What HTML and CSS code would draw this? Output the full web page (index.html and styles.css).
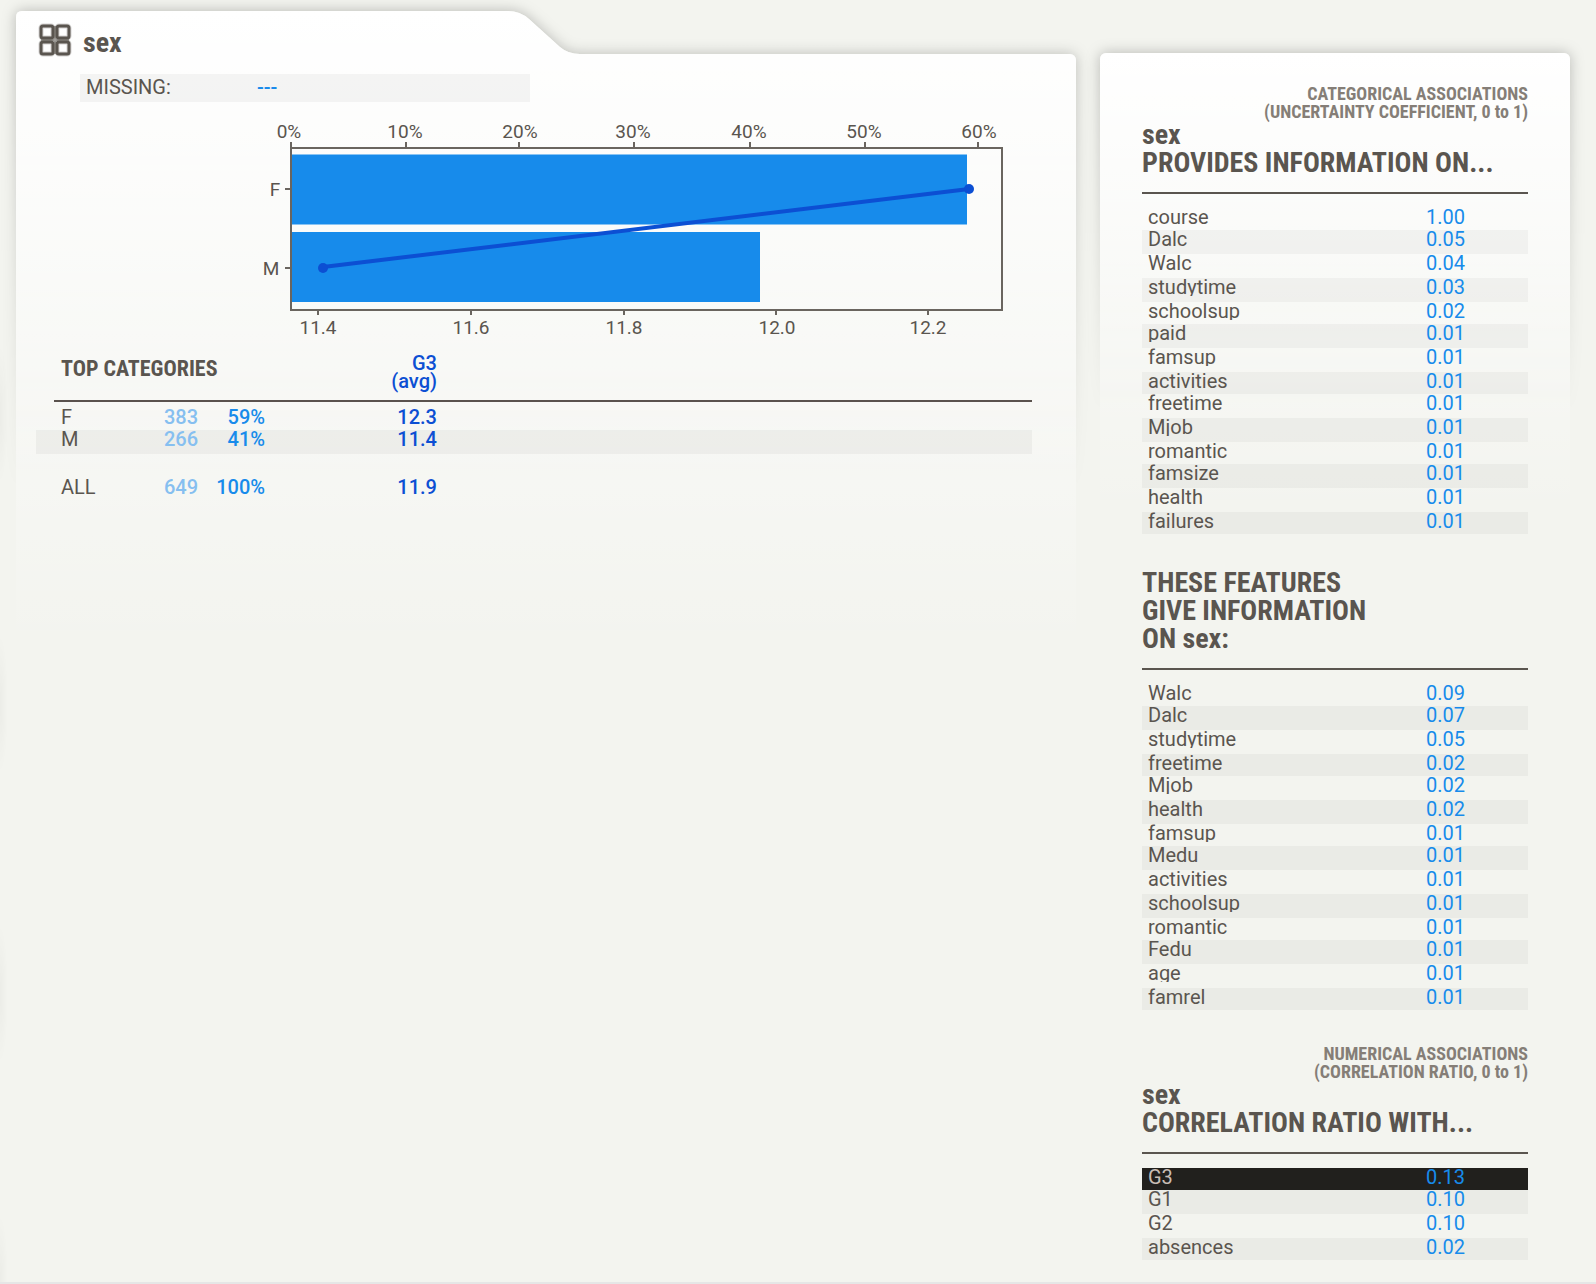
FILE: index.html
```html
<!DOCTYPE html>
<html lang="en">
<head>
<meta charset="utf-8">
<meta name="viewport" content="width=device-width, initial-scale=1">
<title>Feature report: sex</title>
<link rel="stylesheet" href="styles.css">
</head>
<body>
<main class="report">
  <section class="card detail">
    <svg class="backdrop" aria-hidden="true">
      <defs>
        <linearGradient id="fade-left" gradientUnits="userSpaceOnUse" x1="0" y1="0" x2="0" y2="640">
          <stop offset="0" stop-color="#fff"/>
          <stop offset="1" stop-color="#fff" stop-opacity="0"/>
        </linearGradient>
        <linearGradient id="shade-left" gradientUnits="userSpaceOnUse" x1="0" y1="0" x2="0" y2="480">
          <stop offset="0" stop-color="#fff"/>
          <stop offset="1" stop-color="#000"/>
        </linearGradient>
        <mask id="mask-left" maskUnits="userSpaceOnUse" x="-40" y="-40" width="2000" height="700">
          <rect x="-40" y="-40" width="2000" height="700" fill="url(#shade-left)"/>
        </mask>
        <clipPath id="folder">
          <rect x="0" y="43" width="100%" height="700" rx="6"/>
          <path d="M0 60V6Q0 0 6 0H492Q504 0 513 8L544 36Q552 43 564 43V60Z"/>
        </clipPath>
      </defs>
      <g mask="url(#mask-left)">
        <g class="shadow">
          <rect x="0" y="43" width="100%" height="700" rx="6"/>
          <path d="M0 60V6Q0 0 6 0H492Q504 0 513 8L544 36Q552 43 564 43V60Z"/>
        </g>
      </g>
      <g clip-path="url(#folder)">
        <rect width="100%" height="743" fill="url(#fade-left)"/>
      </g>
    </svg>

    <header class="title">
      <svg class="icon" width="32" height="32" viewBox="0 0 32 32" aria-hidden="true">
        <path d="M15 2H17V30H15ZM2 15H30V17H2Z" fill="#5a554f" opacity="0.55"/>
        <g id="tiles" fill="none" stroke="#5a554f" stroke-width="5" opacity="0.25">
          <rect x="2" y="2" width="12" height="12" rx="2"/>
          <rect x="18" y="2" width="12" height="12" rx="2"/>
          <rect x="2" y="18" width="12" height="12" rx="2"/>
          <rect x="18" y="18" width="12" height="12" rx="2"/>
        </g>
        <g fill="none" stroke="#5a554f" stroke-width="3">
          <rect x="2" y="2" width="12" height="12" rx="2"/>
          <rect x="18" y="2" width="12" height="12" rx="2"/>
          <rect x="2" y="18" width="12" height="12" rx="2"/>
          <rect x="18" y="18" width="12" height="12" rx="2"/>
        </g>
      </svg>
      <h1>sex</h1>
    </header>

    <dl class="missing"><dt>MISSING:</dt><dd>---</dd></dl>

    <svg class="chart" viewBox="0 0 780 232" role="img" aria-label="Share of F and M with average G3">
      <g class="bars">
        <rect x="51" y="44.500" width="676" height="70"/>
        <rect x="51" y="122" width="469" height="70"/>
      </g>
      <path class="axis" d="M51 32V200H762V38H51M166 32V38M279 32V38M394 32V38M510 32V38M625 32V38M738 32V38M78 200V205M231 200V205M384 200V205M536 200V205M688 200V205M45 79H51M45 158H51"/>
      <path class="trend" d="M83 157L729 79"/>
      <circle class="dot" cx="83" cy="158" r="5"/>
      <circle class="dot" cx="729" cy="79" r="5"/>
      <g class="labels">
        <text x="49" y="28">0%</text>
        <text x="165" y="28">10%</text>
        <text x="280" y="28">20%</text>
        <text x="393" y="28">30%</text>
        <text x="509" y="28">40%</text>
        <text x="624" y="28">50%</text>
        <text x="739" y="28">60%</text>
        <text x="78" y="224">11.4</text>
        <text x="231" y="224">11.6</text>
        <text x="384" y="224">11.8</text>
        <text x="537" y="224">12.0</text>
        <text x="688" y="224">12.2</text>
        <text x="35" y="86">F</text>
        <text x="31" y="165">M</text>
      </g>
    </svg>

    <table class="categories">
      <colgroup><col class="c-name"><col class="c-count"><col class="c-share"><col class="c-avg"><col></colgroup>
      <thead>
        <tr><th class="name" colspan="3">TOP CATEGORIES</th><th class="avg">G3<br>(avg)</th><th></th></tr>
      </thead>
      <tbody>
        <tr><td class="name">F</td><td class="count">383</td><td class="share">59%</td><td class="avg">12.3</td><td></td></tr>
        <tr class="shaded"><td class="name">M</td><td class="count">266</td><td class="share">41%</td><td class="avg">11.4</td><td></td></tr>
      </tbody>
      <tfoot>
        <tr><td class="name">ALL</td><td class="count">649</td><td class="share">100%</td><td class="avg">11.9</td><td></td></tr>
      </tfoot>
    </table>
  </section>

  <aside class="card associations">
    <svg class="backdrop" aria-hidden="true">
      <defs>
        <linearGradient id="fade-right" gradientUnits="userSpaceOnUse" x1="0" y1="0" x2="0" y2="460">
          <stop offset="0" stop-color="#fff"/>
          <stop offset="1" stop-color="#fff" stop-opacity="0"/>
        </linearGradient>
        <linearGradient id="shade-right" gradientUnits="userSpaceOnUse" x1="0" y1="0" x2="0" y2="360">
          <stop offset="0" stop-color="#fff"/>
          <stop offset="1" stop-color="#000"/>
        </linearGradient>
        <mask id="mask-right" maskUnits="userSpaceOnUse" x="-40" y="-40" width="2000" height="520">
          <rect x="-40" y="-40" width="2000" height="520" fill="url(#shade-right)"/>
        </mask>
      </defs>
      <g mask="url(#mask-right)">
        <g class="shadow"><rect x="0" y="0" width="100%" height="700" rx="6"/></g>
      </g>
      <rect width="100%" height="700" rx="6" fill="url(#fade-right)"/>
    </svg>

    <section>
      <p class="kind">CATEGORICAL ASSOCIATIONS<br>(UNCERTAINTY COEFFICIENT, 0 to 1)</p>
      <h2>sex<br>PROVIDES INFORMATION ON...</h2>
      <table class="scores">
        <tr class="short"><th>course</th><td>1.00</td></tr>
        <tr><th>Dalc</th><td>0.05</td></tr>
        <tr><th>Walc</th><td>0.04</td></tr>
        <tr><th><div>studytime</div></th><td>0.03</td></tr>
        <tr class="short"><th><div>schoolsup</div></th><td>0.02</td></tr>
        <tr><th><div>paid</div></th><td>0.01</td></tr>
        <tr><th><div>famsup</div></th><td>0.01</td></tr>
        <tr class="short"><th>activities</th><td>0.01</td></tr>
        <tr><th>freetime</th><td>0.01</td></tr>
        <tr><th><div>Mjob</div></th><td>0.01</td></tr>
        <tr class="short"><th>romantic</th><td>0.01</td></tr>
        <tr><th>famsize</th><td>0.01</td></tr>
        <tr><th>health</th><td>0.01</td></tr>
        <tr class="short"><th>failures</th><td>0.01</td></tr>
      </table>
    </section>

    <section>
      <h2>THESE FEATURES<br>GIVE INFORMATION<br>ON sex:</h2>
      <table class="scores">
        <tr class="short"><th>Walc</th><td>0.09</td></tr>
        <tr><th>Dalc</th><td>0.07</td></tr>
        <tr><th><div>studytime</div></th><td>0.05</td></tr>
        <tr class="short"><th>freetime</th><td>0.02</td></tr>
        <tr><th><div>Mjob</div></th><td>0.02</td></tr>
        <tr><th>health</th><td>0.02</td></tr>
        <tr class="short"><th><div>famsup</div></th><td>0.01</td></tr>
        <tr><th>Medu</th><td>0.01</td></tr>
        <tr><th>activities</th><td>0.01</td></tr>
        <tr><th><div>schoolsup</div></th><td>0.01</td></tr>
        <tr class="short"><th>romantic</th><td>0.01</td></tr>
        <tr><th>Fedu</th><td>0.01</td></tr>
        <tr><th><div>age</div></th><td>0.01</td></tr>
        <tr class="short"><th>famrel</th><td>0.01</td></tr>
      </table>
    </section>

    <section>
      <p class="kind">NUMERICAL ASSOCIATIONS<br>(CORRELATION RATIO, 0 to 1)</p>
      <h2>sex<br>CORRELATION RATIO WITH...</h2>
      <table class="scores">
        <tr class="short target"><th>G3</th><td>0.13</td></tr>
        <tr><th>G1</th><td>0.10</td></tr>
        <tr><th>G2</th><td>0.10</td></tr>
        <tr class="short"><th>absences</th><td>0.02</td></tr>
      </table>
    </section>
  </aside>
</main>
</body>
</html>
```

FILE: styles.css
```css
* { box-sizing: border-box; }

body {
  margin: 0;
  background: #f3f4ef;
  color: #5a554f;
  font-family: Roboto, "Liberation Sans", sans-serif;
  font-size: 20px;
  line-height: 18px;
}

h1, h2, p, dl, dd { margin: 0; }

h1, h2, .kind, .categories th.name {
  font-family: "Roboto Condensed", "Liberation Sans Narrow", Roboto, sans-serif;
  font-weight: 700;
}

.report {
  position: relative;
  display: grid;
  grid-template-columns: minmax(0, 1060fr) minmax(0, 470fr);
  align-items: start;
  gap: 24px;
  padding: 11px 26px 22px 16px;
  border-bottom: 2px solid #e6e6e6;
  overflow: hidden;
}

/* Soft edges of the summary cards that sit off to the left */
.report::before {
  content: "";
  position: absolute;
  inset: 344px auto 0 0;
  width: 8px;
  background: radial-gradient(ellipse 8px 70px at 0 70px, rgba(0, 0, 0, 0.03), transparent) 0 0 / 8px 290px repeat-y;
}

.card { position: relative; z-index: 0; }

.backdrop {
  position: absolute;
  inset: 0;
  z-index: -1;
  width: 100%;
  height: 100%;
  overflow: visible;
}

.shadow { fill: #f3f4ef; filter: drop-shadow(0 0 7px rgba(0, 0, 0, 0.25)); }

.detail { padding: 13px 44px 0 20px; }

.title { display: flex; gap: 12px; height: 32px; padding-left: 3px; }

.icon { overflow: visible; }

h1 { padding-top: 5px; font-size: 28px; line-height: 28px; }

.missing {
  display: flex;
  width: 450px;
  margin: 18px 0 0 44px;
  padding: 4px 6px 6px;
  background: rgba(0, 0, 0, 0.04);
}

.missing dt { width: 171px; }
.missing dd { color: #178beb; font-weight: 500; }

.chart { display: block; width: 780px; max-width: 100%; margin: 8px 0 0 204px; }
.bars { fill: #178beb; }
.axis { fill: none; stroke: #6a655f; stroke-width: 2; }
.trend { stroke: #0c4fd3; stroke-width: 4; }
.dot { fill: #0c4fd3; }
.labels { fill: #5a554f; font-size: 19px; text-anchor: middle; }

.categories {
  width: 100%;
  margin-top: 6px;
  border-collapse: collapse;
  table-layout: fixed;
  text-align: right;
}

.c-name { width: 100px; }
.c-count { width: 62px; }
.c-share { width: 67px; }
.c-avg { width: 172px; }

.categories th, .categories td { padding: 0; vertical-align: top; font-weight: 500; }
.categories thead tr {
  height: 54px;
  background: linear-gradient(#5a524d, #5a524d) 18px 100% / 100% 2px no-repeat;
}
.categories thead th { padding-top: 6px; }
.categories thead th.name { padding-top: 12px; font-size: 22px; font-weight: 700; }
.categories .name { padding-left: 25px; text-align: left; }
.categories td.name { font-weight: 400; }
.categories .count { color: #86bff0; }
.categories .share { color: #178beb; }
.categories .avg { color: #0c4fd3; }
.categories tbody tr { height: 24px; }
.categories tbody tr:first-child { height: 28px; }
.categories tbody tr:first-child td { padding-top: 6px; }
.categories tfoot tr { height: 48px; }
.categories tfoot td { padding-top: 24px; }
.shaded { background: rgba(0, 0, 0, 0.04); }

.associations {
  display: flex;
  flex-direction: column;
  gap: 35px;
  margin-top: 42px;
  padding: 32px 42px 0;
}

.kind { color: #857e77; font-size: 18px; text-align: right; }

h2 {
  padding-bottom: 15px;
  border-bottom: 2px solid #5a554f;
  font-size: 28px;
  line-height: 28px;
}

.scores {
  width: 100%;
  margin-top: 14px;
  border-collapse: collapse;
  table-layout: fixed;
  text-align: left;
}

.scores tr { height: 24px; }
.scores .short { height: 22px; }
.scores tr:nth-child(even) { background: rgba(0, 0, 0, 0.035); }
.scores th { padding: 0 0 0 6px; font-weight: 400; vertical-align: top; }
.scores th div { height: 18px; overflow: hidden; }
.scores td { width: 102px; padding: 0; color: #178beb; vertical-align: top; }
.scores .target { background: #21201d; color: #c8bdb4; }
```
